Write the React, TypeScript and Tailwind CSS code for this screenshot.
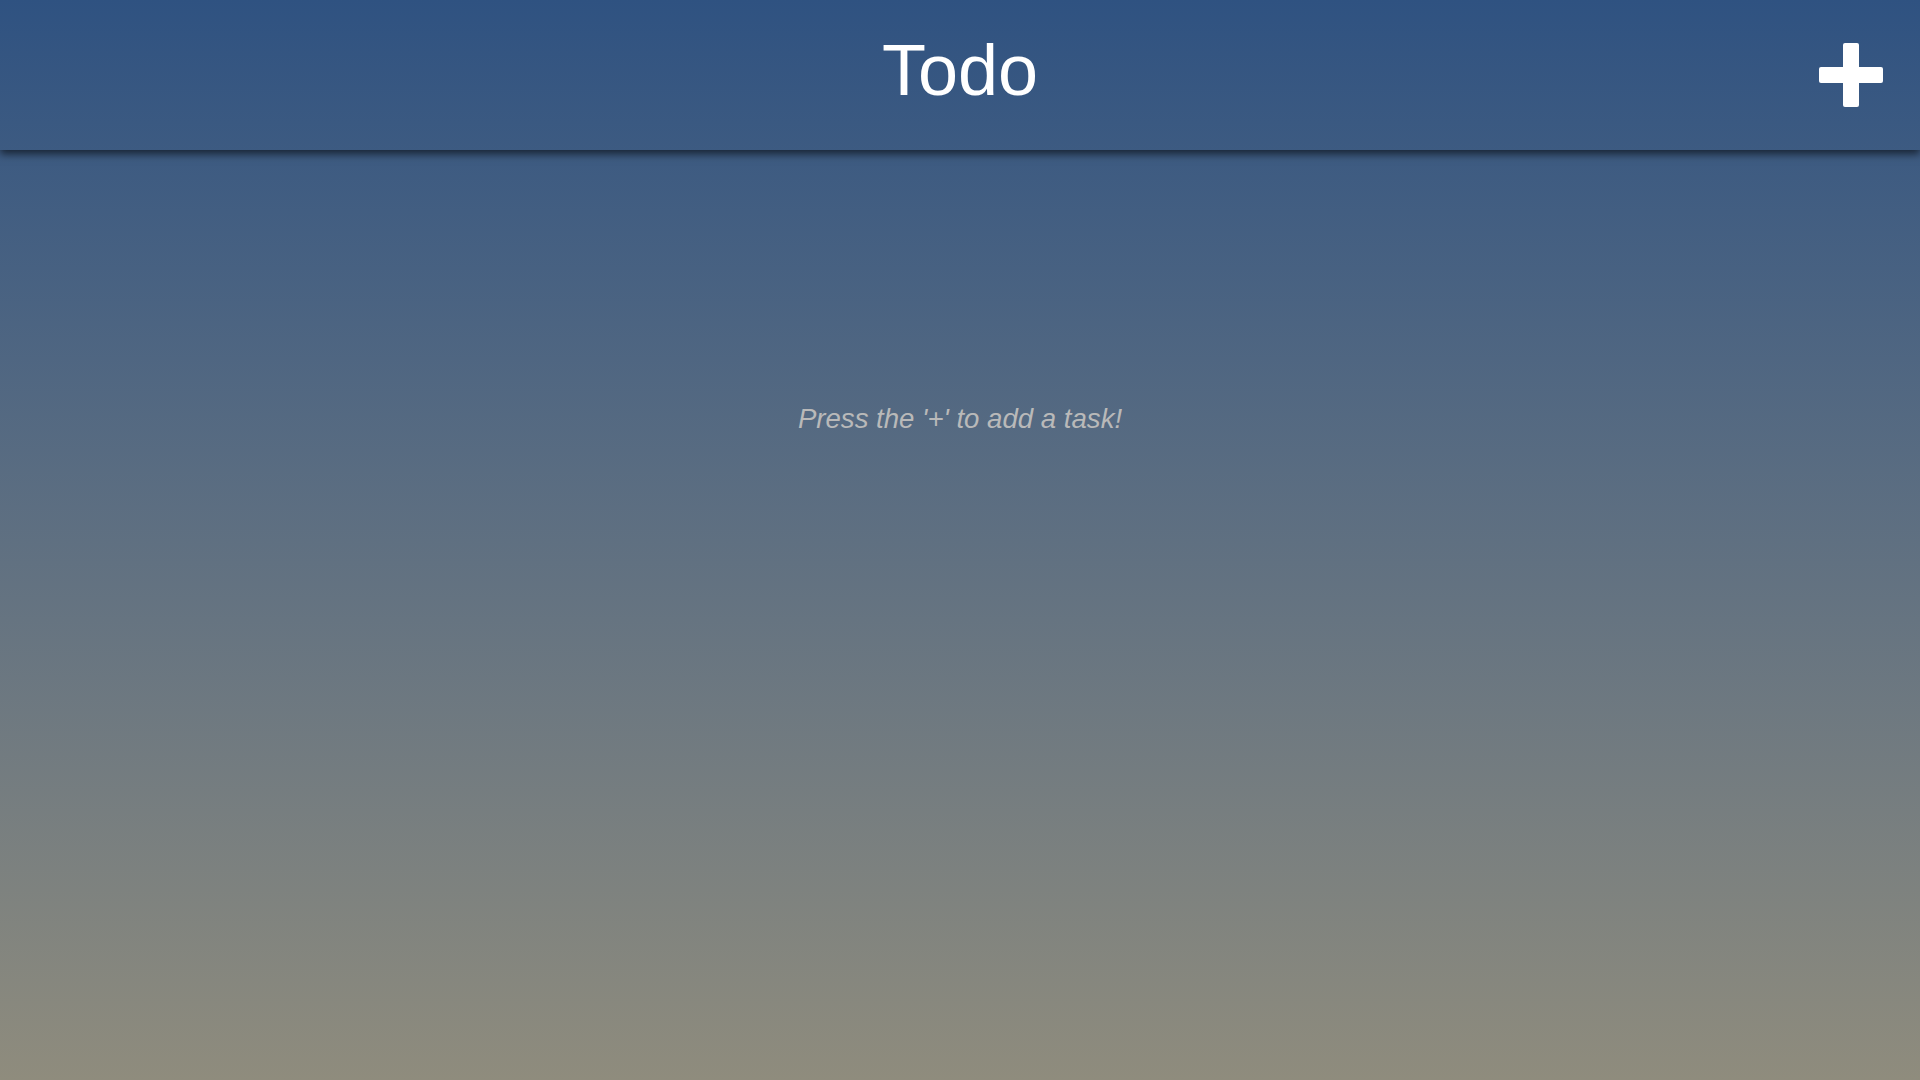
export default function App() {
  return (
    <div
      className="min-h-screen w-full bg-gradient-to-b from-[#2f5281] to-[#8f8c7d] flex flex-col"
      style={{ fontFamily: '"Liberation Sans", Arial, sans-serif' }}
    >
      <header className="relative h-[150px] shrink-0 flex items-center justify-center shadow-[0_4px_8px_rgba(0,0,0,0.6)]">
        <h1 className="text-[72px] leading-none text-white -mt-[10px]">Todo</h1>
        <button className="absolute right-[37px] top-[43px] w-16 h-16 flex items-center justify-center">
          <svg width="64" height="64" viewBox="0 0 64 64">
            <rect x="24" y="0" width="16" height="64" rx="2" fill="#fff" />
            <rect x="0" y="24" width="64" height="16" rx="2" fill="#fff" />
          </svg>
        </button>
      </header>
      <main className="flex justify-center pt-[251px]">
        <p className="italic text-[27.6px] leading-[36px] text-[#b9b9b9]">Press the '+' to add a task!</p>
      </main>
    </div>
  );
}
